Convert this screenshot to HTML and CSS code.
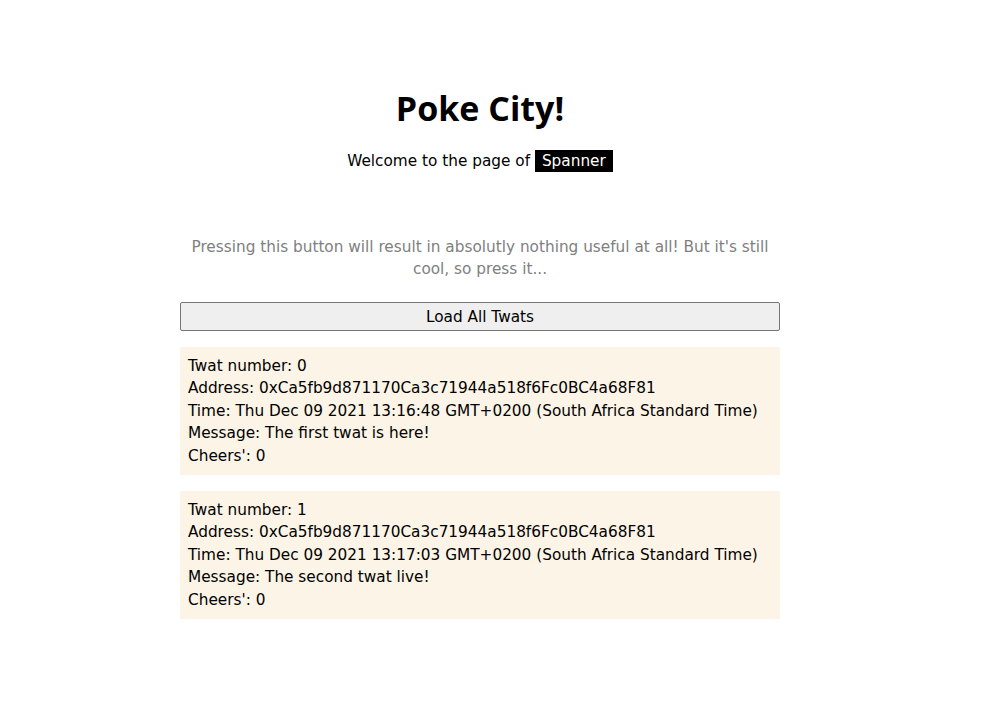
FILE: index.html
```html
<!DOCTYPE html>
<html>
<head>
<meta charset="utf-8">
<link rel="stylesheet" href="styles.css">
</head>
<body>
<div class="frame">
<div class="page">
  <header class="hero">
    <h1 class="title">Poke City!</h1>
    <p class="welcome">Welcome to the page of <span class="name">Spanner</span></p>
  </header>
  <main class="content">
    <p class="note">Pressing this button will result in absolutly nothing useful at all! But it's still cool, so press it...</p>
    <button class="load">Load All Twats</button>
    <div class="twats">
      <div class="twat">
        <div>Twat number: 0</div>
        <div>Address: 0xCa5fb9d871170Ca3c71944a518f6Fc0BC4a68F81</div>
        <div>Time: Thu Dec 09 2021 13:16:48 GMT+0200 (South Africa Standard Time)</div>
        <div>Message: The first twat is here!</div>
        <div>Cheers': 0</div>
      </div>
      <div class="twat">
        <div>Twat number: 1</div>
        <div>Address: 0xCa5fb9d871170Ca3c71944a518f6Fc0BC4a68F81</div>
        <div>Time: Thu Dec 09 2021 13:17:03 GMT+0200 (South Africa Standard Time)</div>
        <div>Message: The second twat live!</div>
        <div>Cheers': 0</div>
      </div>
    </div>
  </main>
</div>
</div>
</body>
</html>
```
FILE: styles.css
```css
html, body {
  margin: 0;
  padding: 0;
  background: #ffffff;
}
body {
  font-family: "DejaVu Sans", sans-serif;
  font-size: 15.3px;
  color: #000;
}
.frame {
  width: 960px;
}
.page {
  width: 600px;
  margin: 0 auto;
  padding-top: 86px;
}
.hero {
  text-align: center;
}
.title {
  margin: 0;
  font-family: "Open Sans", sans-serif;
  font-size: 34px;
  font-weight: 700;
  line-height: 44px;
}
.welcome {
  margin: 20px 0 0;
  line-height: 22px;
}
.name {
  background: #000;
  color: #fff;
  padding: 2px 7px;
}
.content {
  margin-top: 64px;
}
.note {
  margin: 0;
  text-align: center;
  color: #808080;
  line-height: 22px;
  padding: 0 10px;
}
.load {
  display: block;
  width: 600px;
  height: 29px;
  margin-top: 22px;
  background: #efefef;
  border: 1px solid #767676;
  border-radius: 2px;
  font-family: inherit;
  font-size: 15.3px;
  color: #000;
}
.twats {
  display: flex;
  flex-direction: column;
  gap: 16px;
  margin-top: 16px;
}
.twat {
  background: #fcf4e6;
  padding: 8px;
  line-height: 22.4px;
}
```
